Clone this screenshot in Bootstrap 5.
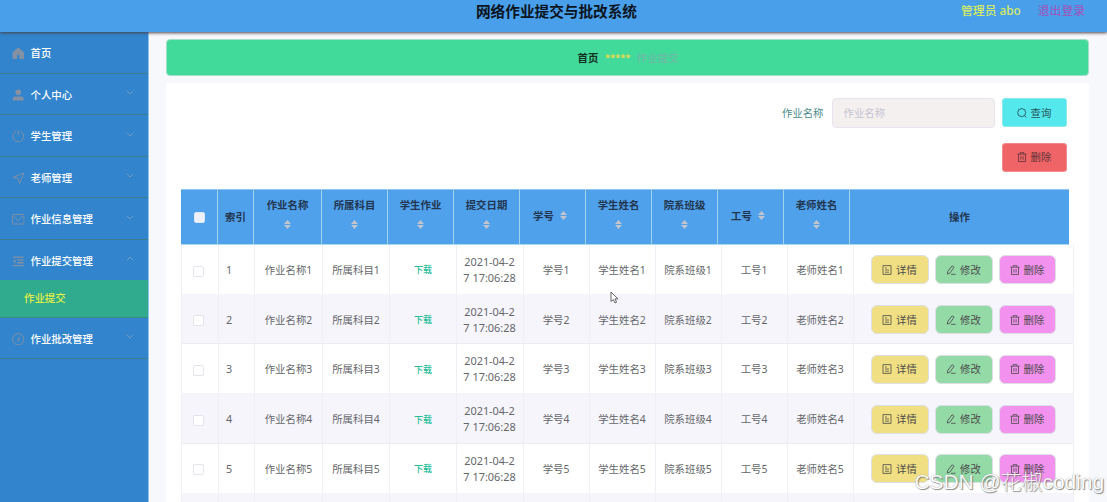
<!DOCTYPE html>
<html lang="zh-CN">
<head>
<meta charset="utf-8">
<meta name="viewport" content="width=device-width, initial-scale=1">
<title>网络作业提交与批改系统</title>
<link href="https://cdn.jsdelivr.net/npm/bootstrap@5.3.0/dist/css/bootstrap.min.css" rel="stylesheet">
<style>
html{font-size:16px}
body{height:502px;overflow:hidden;background:#f6f8fc;font-family:"Noto Sans","Noto Sans CJK SC",sans-serif;font-size:10.4px;line-height:16px;color:#65676b}
svg{display:block;flex:none;fill:none;stroke:currentColor}
.topbar{height:32px;background:#4a9fea;box-shadow:0 1px 3px #4a4048;z-index:3}
.site-title{font-size:14.65px;line-height:22px;font-weight:700;color:#0b1420;padding-left:6px}
.user-area{right:22px;top:0;font-size:11.8px;line-height:21px;gap:17px}
.user-name{color:#d6ea62;font-weight:500}
.logout{color:#a44fb8}
.shell{height:470px;overflow:hidden}
.side{width:149px;background:#3285cd;border-right:1px solid #8fc3ea}
.side-item{height:41.5px;border-bottom:1px solid #3a7f8f;color:#fff;padding:2px 14.5px 0 12px;font-weight:500}
.side-item.open{border-bottom:0;height:40.5px}
.side-item .ico{color:#8590a2;margin-right:6px}
.side-item .arrow{color:#6d9cc8;margin-top:-4px}
.side-sub{height:37.6px;background:#30ab8d;border-bottom:1px solid #3a8d7d;color:#e4ee45;padding-left:24px;font-weight:500}
.main-area{padding:7px 18px 0 17px;min-width:0}
.crumbs{height:37px;background:#41da9a;border:1px solid #a5dfc7;border-radius:4px;gap:6.5px;padding-left:1px}
.stars{color:#e5d94b;font-size:9.4px}
.panel{background:#fff;margin-top:7px;height:440px;padding:14.5px 14px 0 15px}
.search-label{color:#4b8c8c;margin-right:8px}
.search-box{width:163px;height:30px;background:#f5f0f0;border:1px solid #e6e5ef;border-radius:4px;font-size:10.4px;padding:0 11px;margin-right:7px}
.search-box::placeholder{color:#c4c5cf;opacity:1}
.act{height:29px;width:65px;border-radius:3px;border:1px solid;font-size:10.4px;padding:0;gap:4px;line-height:16px}
.act-find{background:#54e7ec;border-color:#8ae9ef;color:#28575c}
.act-del{background:#ef6567;border-color:#f18b8c;color:#613238}
.tools-row{padding-right:8.5px}
.grid-table{table-layout:fixed;border-collapse:separate;border-spacing:0}
.head-grid{width:888px;background:#50a1ec;margin-top:17px}
.head-grid th{height:56.6px;padding:0;border-right:1px solid #a1d2f1;border-top:1px solid #8fc5ef;border-bottom:1px solid #a9d8f3;color:#22364f;font-weight:700;text-align:center;vertical-align:middle}
.head-grid th:last-child{border-right:0}
.sorter{width:7px;height:9px;color:#c0c4cc}
.sorter svg{fill:currentColor;stroke:none}
.stack-head{gap:7px;padding-bottom:8px}
.line-head{gap:6px;padding-right:5px;padding-bottom:2px}
.body-grid{width:892.5px}
.body-grid td{height:49.7px;padding:1px 0 0;text-align:center;vertical-align:middle;border-right:1px solid #efeff5;border-bottom:1px solid #ececf3;white-space:nowrap}
.body-grid td:first-child{border-left:1px solid #efeff5}
.body-grid tr:nth-child(odd) td{border-bottom-color:#f4f4fa}
.body-grid tr:nth-child(even) td{background:#f6f5fc}
.tick{width:11px;height:11px;background:#fff;border:1px solid #e3e4ec;border-radius:2px}
.tick-head{background:#eef0fb;border-color:#d9e8fa}
.body-grid .tick{margin-right:4px}
.body-grid td.idx{text-align:left;padding-left:7px;font-size:10.8px}
.body-grid td.date-cell{font-size:10.9px;padding-right:.5px}
.dl{color:#27bd98;font-size:9px;font-weight:500}
.row-act{width:58px;height:29px;border:1px solid #dcdfe6;border-radius:6px;font-size:10.4px;padding:0;gap:4px;line-height:16px;color:#4c4b4b}
.row-view{background:#f0df83}.row-edit{background:#94daa7}.row-drop{background:#f391ef;width:57px}
.watermark{right:3px;bottom:4px;font-family:"Liberation Sans","Noto Sans CJK SC",sans-serif;font-size:20.9px;line-height:32px;font-weight:300;color:#fff;text-shadow:1px 1px 1px #777,0 0 1px #777;white-space:nowrap;opacity:.85;z-index:5}
.pointer{left:610px;top:291px;z-index:5}
</style>
</head>
<body class="position-relative">
<svg class="d-none">
<symbol id="home" viewBox="0 0 12 12"><path d="M6 1 11 5.3V11H7.6V8.3Q7.6 6.8 6 6.8T4.4 8.3V11H1V5.3Z" fill="currentColor" stroke-linejoin="round"/></symbol>
<symbol id="user" viewBox="0 0 12 12"><circle cx="6" cy="3.2" r="2.7" fill="currentColor" stroke="none"/><path d="M.8 11V9.5Q.8 7.2 3 7.2H9Q11.2 7.2 11.2 9.5V11Z" fill="currentColor" stroke="none"/></symbol>
<symbol id="power" viewBox="0 0 12 12"><path d="M4 1.3A5.2 5.2 0 1 0 8 1.3M6 .4V5" stroke-width=".9"/></symbol>
<symbol id="plane" viewBox="0 0 12 12"><path d="M11.3.9.9 5.3 5.8 6.2 7.3 11.2Z" stroke-width=".9" stroke-linejoin="round"/></symbol>
<symbol id="mail" viewBox="0 0 12 12"><rect x=".5" y="1.4" width="11" height="9.2" rx=".8" stroke-width=".9"/><path d="M1.2 2.6 6 7.3 10.8 2.6" stroke-width=".9"/></symbol>
<symbol id="fold" viewBox="0 0 12 12"><path d="M.8 2H11.2M5 4.7H11.2M5 7.4H11.2M.8 10.2H11.2" stroke-width="1.3"/><path d="M3.4 4.2V8L.8 6.1Z" fill="currentColor" stroke="none"/></symbol>
<symbol id="compass" viewBox="0 0 12 12"><circle cx="6" cy="6" r="5.4" stroke-width=".9"/><path d="M8.1 3.2 7 6.7 4.9 8.5 5.6 5.4Z" fill="currentColor" stroke="none"/></symbol>
<symbol id="down" viewBox="0 0 8 5"><path d="M.8.8 4 4 7.2.8"/></symbol>
<symbol id="up" viewBox="0 0 8 5"><path d="M.8 4.2 4 1 7.2 4.2"/></symbol>
<symbol id="sort" viewBox="0 0 7 9"><path d="M3.5 0 7 4H0ZM0 5H7L3.5 9Z"/></symbol>
<symbol id="find" viewBox="0 0 10 10"><circle cx="4.7" cy="4.6" r="4" stroke-width=".9"/><path d="M7.6 7.6 9.3 9.4" stroke-width=".9"/></symbol>
<symbol id="bin" viewBox="0 0 10 10"><path d="M.4 2.2H9.6M3.2 2.2V.6H6.8V2.2M1.5 2.2V9.5H8.5V2.2M3.9 4.2V7.6M6.1 4.2V7.6" stroke-width=".8"/></symbol>
<symbol id="sheet" viewBox="0 0 10 10"><path d="M1 .6H9V9.4H1ZM3 3H4.8M3 5H7M3 7.2H7" stroke-width=".8"/></symbol>
<symbol id="pen" viewBox="0 0 10 10"><path d="M6.1.8 8.1 2.2 3.8 8.2 1.4 9.1 1.5 6.8ZM5 9.3H9.6" stroke-width=".85" stroke-linejoin="round"/></symbol>
</svg>

<header class="topbar position-relative text-center">
  <div class="site-title">网络作业提交与批改系统</div>
  <div class="user-area position-absolute d-flex"><span class="user-name">管理员 abo</span><span class="logout">退出登录</span></div>
</header>

<div class="shell d-flex">
  <nav class="side flex-shrink-0" id="side"></nav>
  <main class="main-area flex-grow-1">
    <div class="crumbs d-flex align-items-center justify-content-center">
      <b style="color:#14301f">首页</b><b class="stars">*****</b><span style="color:#76b3a8">作业提交</span>
    </div>
    <section class="panel">
      <div class="tools-row d-flex align-items-center justify-content-end">
        <span class="search-label">作业名称</span>
        <input class="search-box" placeholder="作业名称">
        <button class="btn act act-find d-flex align-items-center justify-content-center"><svg width="10" height="10"><use href="#find"/></svg>查询</button>
      </div>
      <div class="tools-row d-flex justify-content-end" style="margin-top:15px">
        <button class="btn act act-del d-flex align-items-center justify-content-center"><svg width="10" height="10"><use href="#bin"/></svg>删除</button>
      </div>
      <table class="grid-table head-grid"><colgroup id="headCols"></colgroup><thead><tr id="headRow"></tr></thead></table>
      <table class="grid-table body-grid"><colgroup id="bodyCols"></colgroup><tbody id="rows"></tbody></table>
    </section>
  </main>
</div>
<svg class="pointer position-absolute" width="9" height="13" viewBox="0 0 9 13"><path d="M1 1V10.5L3.3 8.5 5 12 6.6 11.2 5 7.9H8Z" fill="#fff" stroke="#555" stroke-width=".9"/></svg>
<div class="watermark position-absolute">CSDN @花椒coding</div>

<script>
const icon = (id, w, h) => `<svg width="${w}" height="${h || w}"><use href="#${id}"/></svg>`;
const menu = [['home','首页'],['user','个人中心','down'],['power','学生管理','down'],['plane','老师管理','down'],['mail','作业信息管理','down'],['fold','作业提交管理','up'],['compass','作业批改管理','down']];
document.getElementById('side').innerHTML = menu.map(([i, t, a]) =>
  `<div class="side-item d-flex align-items-center ${a === 'up' ? 'open' : ''}"><span class="ico">${icon(i, 12.5)}</span><span class="flex-grow-1">${t}</span>${a ? `<span class="arrow">${icon(a, 8, 5)}</span>` : ''}</div>` +
  (a === 'up' ? '<div class="side-sub d-flex align-items-center">作业提交</div>' : '')).join('');

const cols = w => w.map(x => `<col style="width:${x}px">`).join('');
document.getElementById('headCols').innerHTML = cols([37,36,68,66,66,66,66,66,66,66,66,219]);
document.getElementById('bodyCols').innerHTML = cols([38,36,68,67,67,66.5,66,66,66,66,66,220]);
const heads = [['', 0],['索引',0],['作业名称',2],['所属科目',2],['学生作业',2],['提交日期',2],['学号',1],['学生姓名',2],['院系班级',2],['工号',1],['老师姓名',2],['操作',0]];
document.getElementById('headRow').innerHTML = heads.map(([t, s], i) => {
  const sort = `<span class="sorter">${icon('sort', 7, 9)}</span>`;
  if (!i) return '<th><span class="tick tick-head d-inline-block align-middle"></span></th>';
  if (s === 2) return `<th><div class="stack-head d-flex flex-column align-items-center">${t}${sort}</div></th>`;
  if (s === 1) return `<th><div class="line-head d-flex align-items-center justify-content-center">${t}${sort}</div></th>`;
  return `<th>${t}</th>`;
}).join('');

const btn = (cls, ic, t) => `<button class="btn row-act ${cls} d-flex align-items-center justify-content-center">${icon(ic, 10)}${t}</button>`;
document.getElementById('rows').innerHTML = [1,2,3,4,5].map(n => `<tr>
  <td><span class="tick d-inline-block align-middle"></span></td><td class="idx">${n}</td><td>作业名称${n}</td><td>所属科目${n}</td>
  <td><span class="dl">下载</span></td><td class="date-cell">2021-04-2<br>7 17:06:28</td><td>学号${n}</td><td>学生姓名${n}</td><td>院系班级${n}</td><td>工号${n}</td><td>老师姓名${n}</td>
  <td><div class="d-flex justify-content-center" style="gap:6px">${btn('row-view','sheet','详情')}${btn('row-edit','pen','修改')}${btn('row-drop','bin','删除')}</div></td></tr>`).join('')
  + `<tr>${'<td></td>'.repeat(12)}</tr>`;
</script>
<script src="https://cdn.jsdelivr.net/npm/bootstrap@5.3.0/dist/js/bootstrap.bundle.min.js"></script>
</body>
</html>
